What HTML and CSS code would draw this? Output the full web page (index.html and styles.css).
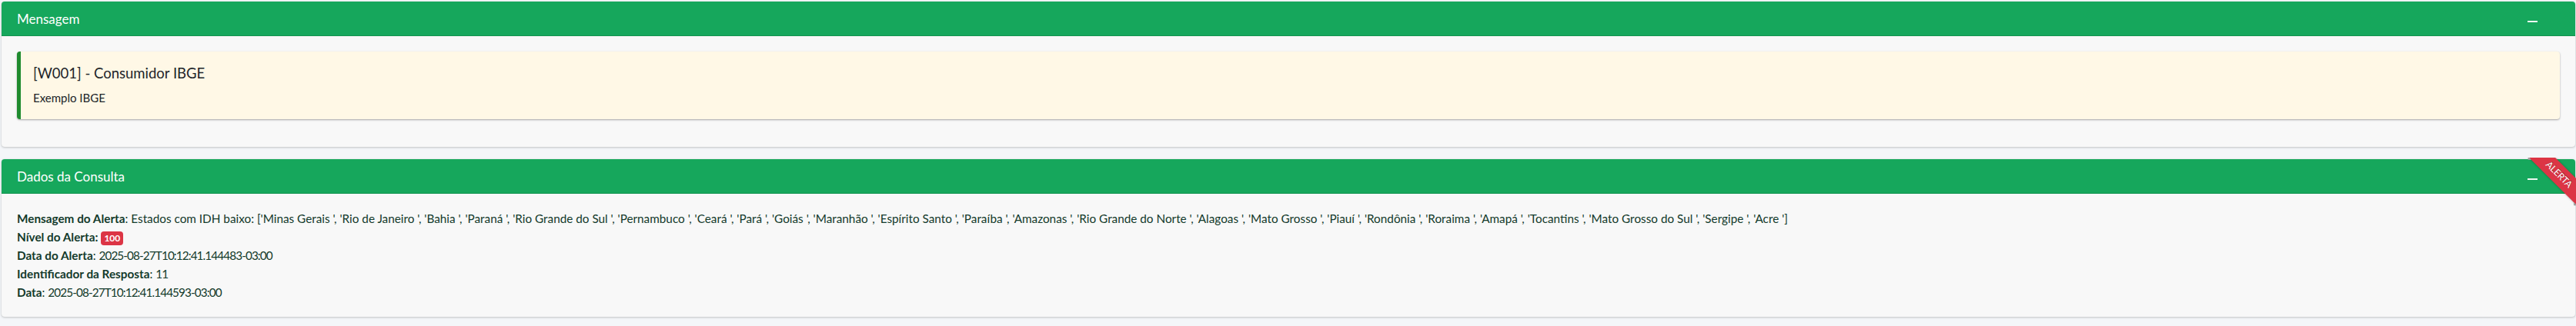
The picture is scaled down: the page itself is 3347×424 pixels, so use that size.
FILE: index.html
```
<!DOCTYPE html>
<html lang="pt-BR">
<head>
<meta charset="utf-8">
<title>Consulta</title>
<link rel="stylesheet" href="styles.css">
</head>
<body>
<div class="wrapper">
  <section class="card">
    <header class="card-header">
      <h3 class="card-title">Mensagem</h3>
      <span class="tool-minus" aria-label="Recolher"></span>
    </header>
    <div class="card-body">
      <div class="callout">
        <h5 class="callout-title">[W001] - Consumidor IBGE</h5>
        <p class="callout-text">Exemplo IBGE</p>
      </div>
    </div>
  </section>

  <section class="card">
    <div class="ribbon-wrapper"><div class="ribbon">Alerta</div></div>
    <header class="card-header">
      <h3 class="card-title">Dados da Consulta</h3>
      <span class="tool-minus" aria-label="Recolher"></span>
    </header>
    <div class="card-body data">
      <div class="line"><strong>Mensagem do Alerta</strong>: Estados com IDH baixo: ['Minas Gerais ', 'Rio de Janeiro ', 'Bahia ', 'Paraná ', 'Rio Grande do Sul ', 'Pernambuco ', 'Ceará ', 'Pará ', 'Goiás ', 'Maranhão ', 'Espírito Santo ', 'Paraíba ', 'Amazonas ', 'Rio Grande do Norte ', 'Alagoas ', 'Mato Grosso ', 'Piauí ', 'Rondônia ', 'Roraima ', 'Amapá ', 'Tocantins ', 'Mato Grosso do Sul ', 'Sergipe ', 'Acre ']</div>
      <div class="line"><strong>Nível do Alerta:</strong> <span class="badge">100</span></div>
      <div class="line"><strong>Data do Alerta</strong>: <span class="num">2025-08-27T10:12:41.144483-03:00</span></div>
      <div class="line"><strong>Identificador da Resposta</strong>: <span class="num">11</span></div>
      <div class="line"><strong>Data</strong>: <span class="num">2025-08-27T10:12:41.144593-03:00</span></div>
    </div>
  </section>
</div>
</body>
</html>
```
FILE: styles.css
```
* { box-sizing: border-box; }

html, body {
  margin: 0;
  background: #f4f6f9;
}

body {
  font-family: "Lato", sans-serif;
  font-size: 16px;
  line-height: 24px;
  color: #212529;
}

.wrapper {
  padding: 2px 1px 0 2px;
}

.card {
  position: relative;
  background: #f8f8f8;
  border-radius: 4px;
  box-shadow: 0 0 1px rgba(0, 0, 0, 0.125), 0 1px 3px rgba(0, 0, 0, 0.2);
  margin-bottom: 16px;
}

.card-header {
  display: flex;
  align-items: center;
  justify-content: space-between;
  background: #16a75c;
  color: #ffffff;
  padding: 12px 20px 11px 20px;
  border-bottom: 1px solid #12934f;
  border-radius: 4px 4px 0 0;
}

.card-title {
  margin: 0;
  font-size: 17px;
  line-height: 21px;
  font-weight: 400;
}

.tool-minus {
  display: block;
  width: 13px;
  height: 2px;
  background: #eef8f2;
  margin: 7px 29px 0 0;
}

.card-body {
  padding: 20px;
}

.callout {
  background: #fff8e6;
  border-left: 5px solid #1f8b2e;
  border-radius: 4px;
  padding: 16px;
  margin-bottom: 16px;
  box-shadow: 0 1px 3px rgba(0, 0, 0, 0.12), 0 1px 2px rgba(0, 0, 0, 0.24);
}

.callout-title {
  margin: 0 0 8px;
  font-size: 18.5px;
  line-height: 24px;
  font-weight: 400;
  color: #212529;
}

.callout-text {
  margin: 0;
  font-size: 15px;
  line-height: 24px;
  color: #212529;
}

.data {
  color: #133a2b;
  white-space: nowrap;
  font-size: 15.3px;
}

.data strong {
  font-weight: 700;
}

.num {
  letter-spacing: -0.9px;
}

.badge {
  display: inline-block;
  background: #dc3545;
  color: #ffffff;
  font-size: 12px;
  font-weight: 700;
  line-height: 12px;
  padding: 3px 4px;
  border-radius: 4px;
  letter-spacing: 0;
}

.ribbon-wrapper {
  position: absolute;
  right: -2px;
  top: -2px;
  width: 70px;
  height: 70px;
  overflow: hidden;
  z-index: 10;
}

.ribbon {
  position: relative;
  right: -2px;
  top: 10px;
  width: 90px;
  padding: 6px 0;
  background: #dc3545;
  color: #ffffff;
  font-size: 12px;
  line-height: 100%;
  text-align: center;
  text-transform: uppercase;
  text-shadow: 0 -1px 0 rgba(0, 0, 0, 0.4);
  box-shadow: 0 0 3px rgba(0, 0, 0, 0.3);
  transform: rotate(45deg);
}

.ribbon::before,
.ribbon::after {
  content: "";
  position: absolute;
  bottom: -3px;
  border-left: 3px solid transparent;
  border-right: 3px solid transparent;
  border-top: 3px solid #9e9e9e;
}

.ribbon::before { left: 0; }
.ribbon::after { right: 0; }
```
